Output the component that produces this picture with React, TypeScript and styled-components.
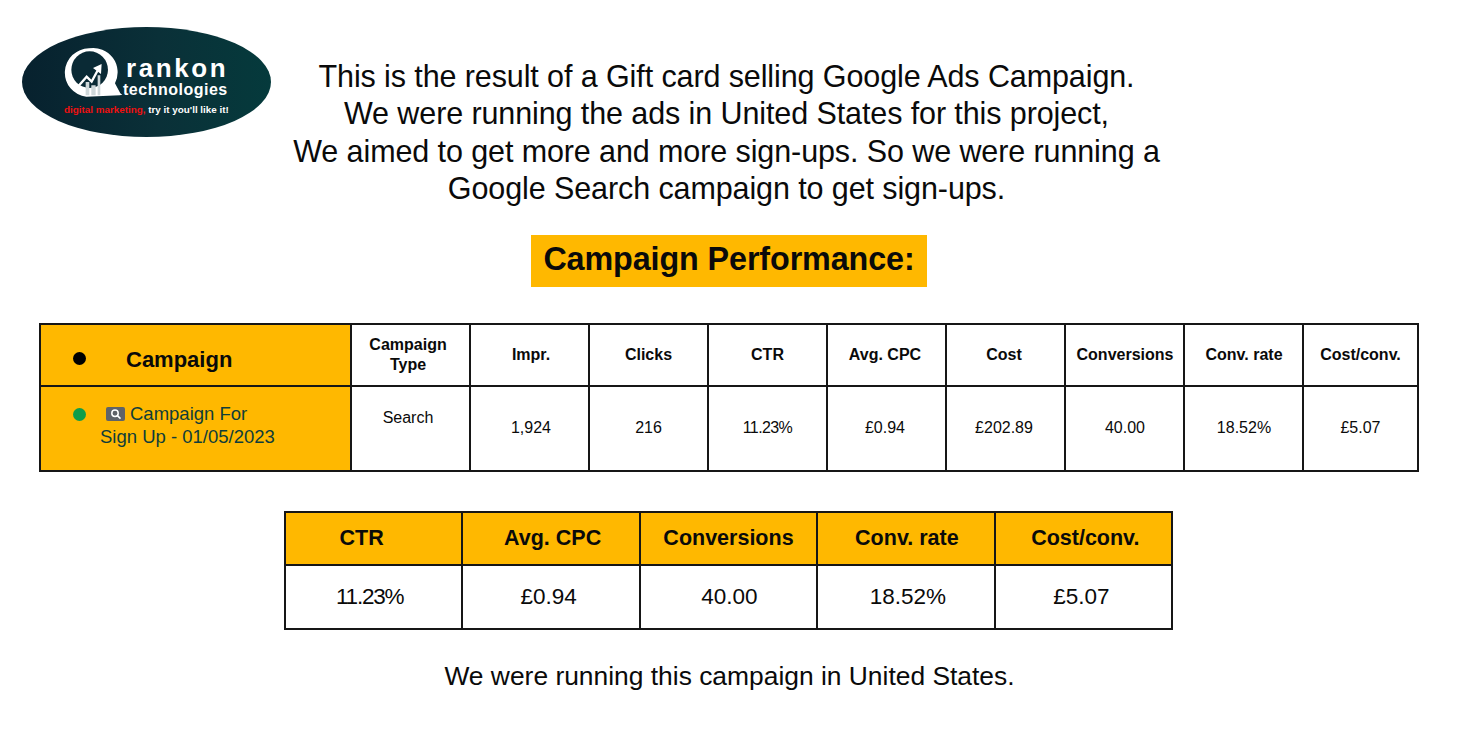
import React from "react";
import styled, { createGlobalStyle, css } from "styled-components";

const Global = createGlobalStyle`
  html, body { margin: 0; padding: 0; background: #fff; }
  body { font-family: "Liberation Sans", Arial, sans-serif; color: #0a0a0a; }
`;

const Page = styled.main`
  width: 1459px;
  height: 730px;
  overflow: hidden;
  display: flex;
  flex-direction: column;
  align-items: center;
`;

const Header = styled.header`
  width: 100%;
  box-sizing: border-box;
  padding: 27px 0 0 22px;
  display: grid;
  grid-template-columns: 249px 1fr 277px;
`;

const LogoWrap = styled.div`
  width: 249px;
  height: 110px;
  position: relative;
  border-radius: 50%;
  background: linear-gradient(90deg, #07212e 0%, #0a3038 55%, #053a3c 100%);
  overflow: hidden;
`;

const LogoMark = styled.svg`
  position: absolute;
  left: 41px;
  top: 20px;
`;

const LogoName = styled.span`
  position: absolute;
  left: 104px;
  top: 25px;
  font-size: 26px;
  line-height: 32px;
  font-weight: 700;
  color: #fff;
  letter-spacing: 2.6px;
`;

const LogoSub = styled.span`
  position: absolute;
  left: 101px;
  top: 53px;
  font-size: 16px;
  line-height: 20px;
  font-weight: 700;
  color: #fff;
  letter-spacing: 0.5px;
`;

const LogoTag = styled.span`
  position: absolute;
  left: 42px;
  top: 77px;
  font-size: 9.85px;
  line-height: 12px;
  font-weight: 700;
  color: #fff;
  white-space: nowrap;
`;

const LogoRed = styled.span`
  color: #f01010;
`;

const Intro = styled.p`
  margin: 31px 0 0;
  text-align: center;
  font-size: 30.5px;
  line-height: 37.4px;
  letter-spacing: -0.1px;
  white-space: nowrap;
`;

const Banner = styled.h1`
  margin: 27px 1px 0 0;
  width: 396px;
  height: 52px;
  background: #ffb800;
  font-size: 32.3px;
  line-height: 48px;
  font-weight: 700;
  text-align: center;
  letter-spacing: -0.1px;
`;

const Table = styled.table<{ $w: number; $mt: number; $mr: number }>`
  border-collapse: collapse;
  table-layout: fixed;
  width: ${(p) => p.$w}px;
  margin: ${(p) => p.$mt}px ${(p) => p.$mr}px 0 0;
  flex: none;
`;

/* $shift moves a centred label: positive to the right, negative to the left */
const shifted = css<{ $shift?: number }>`
  padding-left: ${(p) => Math.max(p.$shift ?? 0, 0)}px;
  padding-right: ${(p) => Math.max(-(p.$shift ?? 0), 0)}px;
`;

const Th = styled.th<{ $shift?: number }>`
  border: 2px solid #161616;
  padding-top: 0;
  padding-bottom: 0;
  ${shifted}
  font-size: 16px;
  line-height: 20px;
  font-weight: 700;
  text-align: center;
  vertical-align: middle;
`;

const Td = styled.td<{ $shift?: number; $tight?: boolean }>`
  border: 2px solid #161616;
  padding-top: 0;
  padding-bottom: 0;
  ${shifted}
  font-size: 16px;
  line-height: 20px;
  text-align: center;
  vertical-align: middle;
  letter-spacing: ${(p) => (p.$tight ? "-0.6px" : "0")};
`;

const TypeCell = styled(Td)`
  vertical-align: top;
  padding: 21px 5px 0 0;
`;

const CampaignHead = styled(Th)`
  background: #ffb800;
  font-size: 22px;
  text-align: left;
  padding: 10px 0 0 85px;
  position: relative;
`;

const CampaignCell = styled(Td)`
  background: #ffb800;
  text-align: left;
  vertical-align: top;
  padding: 15px 0 0 59px;
  color: #0f3d3a;
  font-size: 18.5px;
  line-height: 23px;
  position: relative;
`;

const Dot = styled.span<{ $c: string; $top: number }>`
  position: absolute;
  left: 32px;
  top: ${(p) => p.$top}px;
  width: 13px;
  height: 13px;
  border-radius: 50%;
  background: ${(p) => p.$c};
`;

const SearchChip = styled.svg`
  vertical-align: -1px;
  margin: 0 5px 0 6px;
`;

const Row = styled.tr<{ $h: number }>`
  height: ${(p) => p.$h}px;
`;

const BigTh = styled(Th)`
  background: #ffb800;
  font-size: 21.5px;
`;

const BigTd = styled(Td)`
  font-size: 22.5px;
  letter-spacing: ${(p) => (p.$tight ? "-1.2px" : "0")};
`;

const Outro = styled.p`
  margin: 30px 0 0;
  font-size: 26.4px;
  line-height: 32px;
  text-align: center;
`;

const topCols = [311, 119, 119, 119, 119, 119, 119, 119, 119, 115];
const topHeads = [
  { t: "Impr.", s: 3 },
  { t: "Clicks", s: 0 },
  { t: "CTR", s: 0 },
  { t: "Avg. CPC", s: -3 },
  { t: "Cost", s: -3 },
  { t: "Conversions", s: 1 },
  { t: "Conv. rate", s: 1 },
  { t: "Cost/conv.", s: 0 },
];
const topVals = [
  { t: "1,924", s: 3, tight: false },
  { t: "216", s: 0, tight: false },
  { t: "11.23%", s: 0, tight: true },
  { t: "£0.94", s: -3, tight: false },
  { t: "£202.89", s: -3, tight: false },
  { t: "40.00", s: 1, tight: false },
  { t: "18.52%", s: 1, tight: false },
  { t: "£5.07", s: 0, tight: false },
];
const botHeads = [
  { t: "CTR", s: -24 },
  { t: "Avg. CPC", s: 3 },
  { t: "Conversions", s: 0 },
  { t: "Conv. rate", s: 2 },
  { t: "Cost/conv.", s: 4 },
];
const botVals = [
  { t: "11.23%", s: -8, tight: true },
  { t: "£0.94", s: -5, tight: false },
  { t: "40.00", s: 2, tight: false },
  { t: "18.52%", s: 4, tight: false },
  { t: "£5.07", s: -4, tight: false },
];

export default function App() {
  return (
    <Page>
      <Global />
      <Header>
        <LogoWrap>
          <LogoMark width="63.3" height="51.7" viewBox="160 95 190 155" fill="none">
            <path
              d="M238 99a73 73 0 0 0-8 145.5L330 240l8-2-6-4-16-30a73 73 0 0 0-78-105z"
              fill="#fff"
            />
            <circle cx="240" cy="163" r="55" fill="#0a2a35" />
            <path d="M198 222 231 184 246 199 268 158" stroke="#fff" strokeWidth="7" />
            <path d="M250 158 276 146 274 176Z" fill="#fff" />
            <path d="M228 240V200h11v40zM245 240V210h13v30zM264 240V180h8v60z" fill="#cfd8da" />
          </LogoMark>
          <LogoName>rankon</LogoName>
          <LogoSub>technologies</LogoSub>
          <LogoTag>
            <LogoRed>digital marketing,</LogoRed> try it you'll like it!
          </LogoTag>
        </LogoWrap>
        <Intro>
          This is the result of a Gift card selling Google Ads Campaign.
          <br />
          We were running the ads in United States for this project,
          <br />
          We aimed to get more and more sign-ups. So we were running a
          <br />
          Google Search campaign to get sign-ups.
        </Intro>
      </Header>

      <Banner>Campaign Performance:</Banner>

      <Table $w={1378} $mt={36} $mr={1}>
        <colgroup>
          {topCols.map((w, i) => (
            <col key={i} style={{ width: w }} />
          ))}
        </colgroup>
        <tbody>
          <Row $h={62}>
            <CampaignHead>
              <Dot $c="#000" $top={27} />
              Campaign
            </CampaignHead>
            <Th $shift={-5}>
              Campaign
              <br />
              Type
            </Th>
            {topHeads.map((h) => (
              <Th key={h.t} $shift={h.s}>
                {h.t}
              </Th>
            ))}
          </Row>
          <Row $h={85}>
            <CampaignCell>
              <Dot $c="#0f9d4a" $top={21} />
              <SearchChip width="19" height="14" viewBox="0 0 19 14">
                <rect width="19" height="14" rx="2" fill="#5f6368" />
                <circle cx="9" cy="6.3" r="3.2" fill="none" stroke="#fff" strokeWidth="1.5" />
                <path d="M11.4 8.7 14.5 11.6" stroke="#fff" strokeWidth="1.6" />
              </SearchChip>
              Campaign For
              <br />
              Sign Up - 01/05/2023
            </CampaignCell>
            <TypeCell>Search</TypeCell>
            {topVals.map((v) => (
              <Td key={v.t} $shift={v.s} $tight={v.tight}>
                {v.t}
              </Td>
            ))}
          </Row>
        </tbody>
      </Table>

      <Table $w={889} $mt={39} $mr={2}>
        <tbody>
          <Row $h={53}>
            {botHeads.map((h) => (
              <BigTh key={h.t} $shift={h.s}>
                {h.t}
              </BigTh>
            ))}
          </Row>
          <Row $h={64}>
            {botVals.map((v) => (
              <BigTd key={v.t} $shift={v.s} $tight={v.tight}>
                {v.t}
              </BigTd>
            ))}
          </Row>
        </tbody>
      </Table>

      <Outro>We were running this campaign in United States.</Outro>
    </Page>
  );
}
